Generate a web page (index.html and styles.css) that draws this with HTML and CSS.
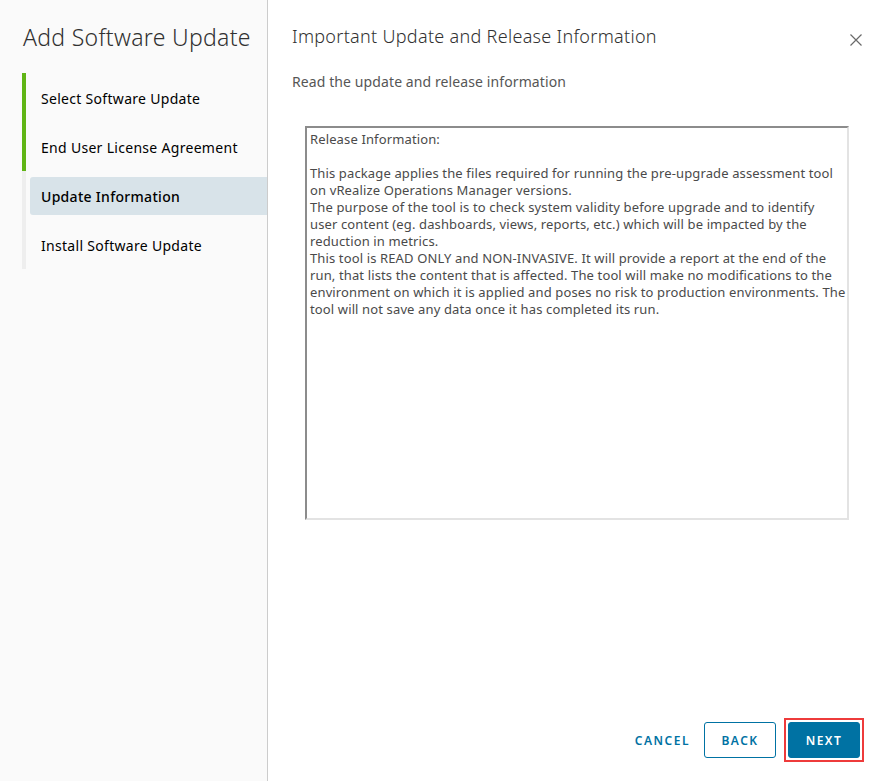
FILE: index.html
```html
<!DOCTYPE html>
<html lang="en">
<head>
    <meta charset="UTF-8">
    <title>Add Software Update</title>
    <link rel="stylesheet" href="styles.css">
</head>
<body>
    <div class="wizard">
        <!-- Steps sidebar -->
        <div class="wizard-nav">
            <h2 class="wizard-title">Add Software Update</h2>
            <div class="steps">
                <a href="#" class="step done">Select Software Update</a>
                <a href="#" class="step done">End User License Agreement</a>
                <a href="#" class="step active">Update Information</a>
                <a href="#" class="step">Install Software Update</a>
            </div>
        </div>

        <!-- Page content -->
        <div class="wizard-content">
            <div class="content-header">
                <h3 class="page-title">Important Update and Release Information</h3>
                <button class="close-btn" aria-label="Close">
                    <svg width="14" height="14" viewBox="0 0 14 14">
                        <path d="M1.5 1.5 L12.5 12.5 M12.5 1.5 L1.5 12.5" stroke="#6a6a6a" stroke-width="1.2" fill="none"/>
                    </svg>
                </button>
            </div>
            <p class="page-desc">Read the update and release information</p>

            <textarea class="release-info" readonly>Release Information:

This package applies the files required for running the pre-upgrade assessment tool
on vRealize Operations Manager versions.
The purpose of the tool is to check system validity before upgrade and to identify
user content (eg. dashboards, views, reports, etc.) which will be impacted by the
reduction in metrics.
This tool is READ ONLY and NON-INVASIVE. It will provide a report at the end of the
run, that lists the content that is affected. The tool will make no modifications to the
environment on which it is applied and poses no risk to production environments. The
tool will not save any data once it has completed its run.</textarea>

            <div class="footer">
                <button class="btn btn-link">Cancel</button>
                <button class="btn btn-outline">Back</button>
                <div class="highlight">
                    <button class="btn btn-primary">Next</button>
                </div>
            </div>
        </div>
    </div>
</body>
</html>
```

FILE: styles.css
```css
body {
    margin: 0;
    padding: 0;
    font-family: "Noto Sans", "Open Sans", sans-serif;
    background-color: white;
    color: #000;
}

.wizard {
    display: flex;
    width: 886px;
    height: 781px;
    box-sizing: border-box;
}

.wizard-nav {
    width: 268px;
    flex-shrink: 0;
    background-color: #fafafa;
    border-right: 1px solid #cccccc;
    box-sizing: border-box;
}

.wizard-title {
    margin: 21px 0 0 23px;
    font-size: 23px;
    font-weight: 300;
    color: #313131;
    line-height: 32px;
    letter-spacing: 0.3px;
}

.steps {
    margin: 20px 0 0 22px;
    display: flex;
    flex-direction: column;
}

.step {
    position: relative;
    z-index: 0;
    height: 49px;
    display: flex;
    align-items: center;
    padding-left: 15px;
    padding-top: 2px;
    box-sizing: border-box;
    border-left: 4px solid #eeeeee;
    color: #000;
    text-decoration: none;
    font-size: 14px;
    letter-spacing: 0.3px;
}

.step.done {
    border-left-color: #60b515;
}

.step.active {
    font-weight: 500;
}

/* highlight sits inset from the step rail */
.step.active:before {
    content: "";
    position: absolute;
    left: 4px;
    right: 0;
    top: 6px;
    bottom: 5px;
    background-color: #d8e3e9;
    border-radius: 3px 0 0 3px;
    z-index: -1;
}

.wizard-content {
    flex: 1;
    display: flex;
    flex-direction: column;
    padding: 23px 22px 19px 24px;
}

.content-header {
    display: flex;
    justify-content: space-between;
    align-items: flex-start;
}

.page-title {
    margin: 0;
    font-size: 18px;
    font-weight: 300;
    color: #313131;
    line-height: 26px;
    letter-spacing: 0.3px;
}

.close-btn {
    background: none;
    border: none;
    padding: 0;
    margin-top: 10px;
    margin-right: 1px;
    cursor: pointer;
    display: flex;
}

.page-desc {
    margin: 23px 0 0 0;
    font-size: 14px;
    color: #565656;
    line-height: 20px;
    letter-spacing: 0.1px;
}

.release-info {
    margin: 34px 0 0 13px;
    width: 544px;
    height: 394px;
    box-sizing: border-box;
    border: 2px solid #e3e3e3;
    border-top-color: #8c8c8c;
    border-left-color: #8c8c8c;
    padding: 3px 3px 2px 3px;
    font-family: "Noto Sans", "Open Sans", sans-serif;
    font-size: 13px;
    line-height: 17px;
    letter-spacing: 0.13px;
    color: #4a4a4a;
    resize: none;
    white-space: pre;
    overflow: hidden;
}

.footer {
    margin-top: auto;
    display: flex;
    justify-content: flex-end;
    align-items: center;
}

.btn {
    height: 36px;
    padding: 0 13px;
    font-family: "Noto Sans", "Open Sans", sans-serif;
    font-size: 12px;
    font-weight: 600;
    letter-spacing: 1.5px;
    text-transform: uppercase;
    border-radius: 3px;
    cursor: pointer;
}

.btn-link {
    background: none;
    border: none;
    color: #0072a3;
    margin-right: 1px;
}

.btn-outline {
    width: 72px;
    background: white;
    border: 1px solid #0072a3;
    color: #0072a3;
}

.highlight {
    margin-left: 8px;
    padding: 2px;
    border: 2px solid #ee3b3b;
}

.btn-primary {
    width: 72px;
    display: block;
    background-color: #0072a3;
    border: 1px solid #0072a3;
    color: white;
}
```
